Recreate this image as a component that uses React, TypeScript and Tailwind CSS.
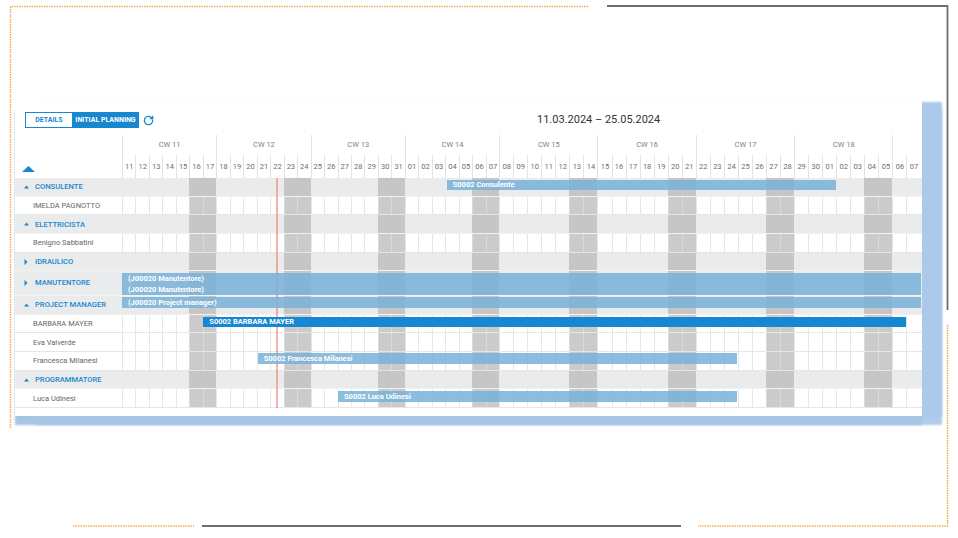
import React from 'react';
import { RotateCw } from 'lucide-react';

const DAYS: number[] = [];
for (let d = 11; d <= 31; d++) DAYS.push(d);
for (let d = 1; d <= 30; d++) DAYS.push(d);
for (let d = 1; d <= 7; d++) DAYS.push(d);
const WEEKEND = new Set([5, 6, 12, 13, 19, 20, 26, 27, 33, 34, 40, 41, 47, 48, 54, 55]);
const pad = (n: number) => (n < 10 ? '0' + n : '' + n);

const GRID = 'grid grid-cols-[repeat(28,13.47px)_repeat(30,14.05px)]';

type Bar = { l: number; w: number; text: string; top?: number; dark?: boolean };
type Row = { cat: boolean; label: string; open?: boolean; tall?: boolean; bars?: Bar[] };

const ROWS: Row[] = [
  { cat: true, label: 'CONSULENTE', open: true, bars: [{ l: 324.7, w: 389.5, text: 'S0002 Consulente' }] },
  { cat: false, label: 'IMELDA PAGNOTTO' },
  { cat: true, label: 'ELETTRICISTA', open: true },
  { cat: false, label: 'Benigno Sabbatini' },
  { cat: true, label: 'IDRAULICO', open: false },
  {
    cat: true,
    label: 'MANUTENTORE',
    open: false,
    tall: true,
    bars: [
      { l: 0, w: 799, top: 1.8, text: '(J00020 Manutentore)' },
      { l: 0, w: 799, top: 12.5, text: '(J00020 Manutentore)' },
    ],
  },
  { cat: true, label: 'PROJECT MANAGER', open: true, bars: [{ l: 0, w: 799, top: 1, text: '(J00020 Project manager)' }] },
  { cat: false, label: 'BARBARA MAYER', bars: [{ l: 81.3, w: 702.7, top: 2, text: 'S0002 BARBARA MAYER', dark: true }] },
  { cat: false, label: 'Eva Valverde' },
  { cat: false, label: 'Francesca Milanesi', bars: [{ l: 135.7, w: 479.3, top: 1.2, text: 'S0002 Francesca Milanesi' }] },
  { cat: true, label: 'PROGRAMMATORE', open: true },
  { cat: false, label: 'Luca Udinesi', bars: [{ l: 216, w: 399, top: 1.5, text: 'S0002 Luca Udinesi' }] },
];

const WEEKS = ['CW 11', 'CW 12', 'CW 13', 'CW 14', 'CW 15', 'CW 16', 'CW 17', 'CW 18'];

function DayCells({ cat }: { cat: boolean }) {
  return (
    <div className={GRID + ' h-full'}>
      {DAYS.map((_, i) => {
        const we = WEEKEND.has(i);
        if (cat) return <div key={i} className={we ? 'bg-[#c6c6c6]' : ''} />;
        return (
          <div
            key={i}
            className={we ? 'border-l border-[#dadada] bg-[#cbcbcb]' : 'border-l border-[#e6e6e6]'}
          />
        );
      })}
    </div>
  );
}

function UpArrow() {
  return (
    <svg width="5" height="4" viewBox="0 0 5 4">
      <polygon points="0,3.5 2.5,0.5 5,3.5" fill="#1787d0" />
    </svg>
  );
}
function RightArrow() {
  return (
    <svg width="4" height="6" viewBox="0 0 4 6">
      <polygon points="0.5,0 3.5,3 0.5,6" fill="#1787d0" />
    </svg>
  );
}

export default function App() {
  return (
    <div className="relative w-[958px] h-[538px] bg-white overflow-hidden font-[Roboto,sans-serif]">
      <svg className="absolute inset-0" width="958" height="538">
        <path d="M10.5 428 V6.5 H588" stroke="#f3aa55" strokeWidth="1.5" strokeDasharray="1.5 1" fill="none" />
        <path d="M607 6 H947.5 V310" stroke="#6e6e6e" strokeWidth="1.8" fill="none" />
        <path d="M947.5 325 V526 H698" stroke="#f3aa55" strokeWidth="1.5" strokeDasharray="1.5 1" fill="none" />
        <path d="M73 526 H194" stroke="#f3aa55" strokeWidth="1.5" strokeDasharray="1.5 1" fill="none" />
        <path d="M202 526 H681" stroke="#6e6e6e" strokeWidth="1.8" fill="none" />
      </svg>

      <div className="relative pt-[101px] pl-[15px]">
        <div className="w-[907px] bg-white pt-[11px] pb-[8px] shadow-[20px_1px_2px_0_#abc9e8,0_9px_2px_0_#a6c5e6,20px_9px_2px_0_#b0cdea]">
          {/* toolbar */}
          <div className="flex items-center h-[16px] pl-[10px]">
            <div className="flex h-[16px] border border-[#1787d0]">
              <div className="w-[46px] flex items-center justify-center text-[7px] font-bold text-[#1787d0]">
                DETAILS
              </div>
              <div className="w-[67px] -mr-px flex items-center justify-center bg-[#1787d0] text-[7px] font-bold text-white whitespace-nowrap">
                INITIAL PLANNING
              </div>
            </div>
            <RotateCw size={11} strokeWidth={3} color="#1787d0" className="ml-[4px]" />
            <div className="ml-[383px] text-[11px] text-[#333333] whitespace-nowrap">11.03.2024 – 25.05.2024</div>
          </div>

          {/* header */}
          <div className="flex mt-[7px] h-[43px]">
            <div className="w-[107px] flex items-end pl-[7px] pb-[6px]">
              <svg width="13" height="6" viewBox="0 0 13 6">
                <polygon points="0,6 6.5,0 13,6" fill="#1787d0" />
              </svg>
            </div>
            <div className="w-[799px] flex flex-col">
              <div className={GRID + ' h-[20px]'}>
                {WEEKS.map((w) => (
                  <div
                    key={w}
                    className="col-span-7 border-l border-[#e3e3e3] flex items-center justify-center text-[7.5px] text-[#808080]"
                  >
                    {w}
                  </div>
                ))}
                <div className="col-span-2 border-l border-[#e3e3e3]" />
              </div>
              <div className={GRID + ' h-[23px]'}>
                {DAYS.map((d, i) => (
                  <div
                    key={i}
                    className="border-l border-[#e3e3e3] flex items-center justify-center text-[7.5px] text-[#6e6e6e]"
                  >
                    {pad(d)}
                  </div>
                ))}
              </div>
            </div>
          </div>

          {/* rows */}
          <div className="relative">
            {ROWS.map((r, idx) => (
              <div
                key={idx}
                className={
                  'flex border-b ' +
                  (r.tall ? 'h-[24.5px] ' : 'h-[18.7px] ') +
                  (r.cat ? 'bg-[#eaebec] border-[#f2f2f2]' : 'bg-white border-[#e6e6e6]')
                }
              >
                {r.cat ? (
                  <div className="w-[107px] flex items-center pl-[9px] text-[7.6px] font-medium text-[#1787d0] whitespace-nowrap">
                    <span className="w-[11px] flex items-center">{r.open ? <UpArrow /> : <RightArrow />}</span>
                    <span>{r.label}</span>
                  </div>
                ) : (
                  <div className="w-[107px] flex items-center pl-[18px] text-[7.5px] text-[#666666] whitespace-nowrap">
                    {r.label}
                  </div>
                )}
                <div className="relative w-[799px]">
                  <DayCells cat={r.cat} />
                  {r.bars?.map((b, j) => (
                    <div
                      key={j}
                      className={
                        'absolute z-10 h-[10.7px] flex items-center pl-[6px] text-[7.5px] font-bold text-white whitespace-nowrap overflow-hidden ' +
                        (b.dark ? 'bg-[#1488d2]' : 'bg-[#78b2d8]/85')
                      }
                      style={{ left: b.l, width: b.w, top: b.top ?? 1.5 }}
                    >
                      {b.text}
                    </div>
                  ))}
                </div>
              </div>
            ))}
            <svg className="absolute top-0 left-[260px] h-full" width="4" preserveAspectRatio="none">
              <line x1="2" y1="0" x2="2" y2="100%" stroke="#ef7f74" strokeWidth="1.2" />
            </svg>
          </div>
        </div>
      </div>
    </div>
  );
}
